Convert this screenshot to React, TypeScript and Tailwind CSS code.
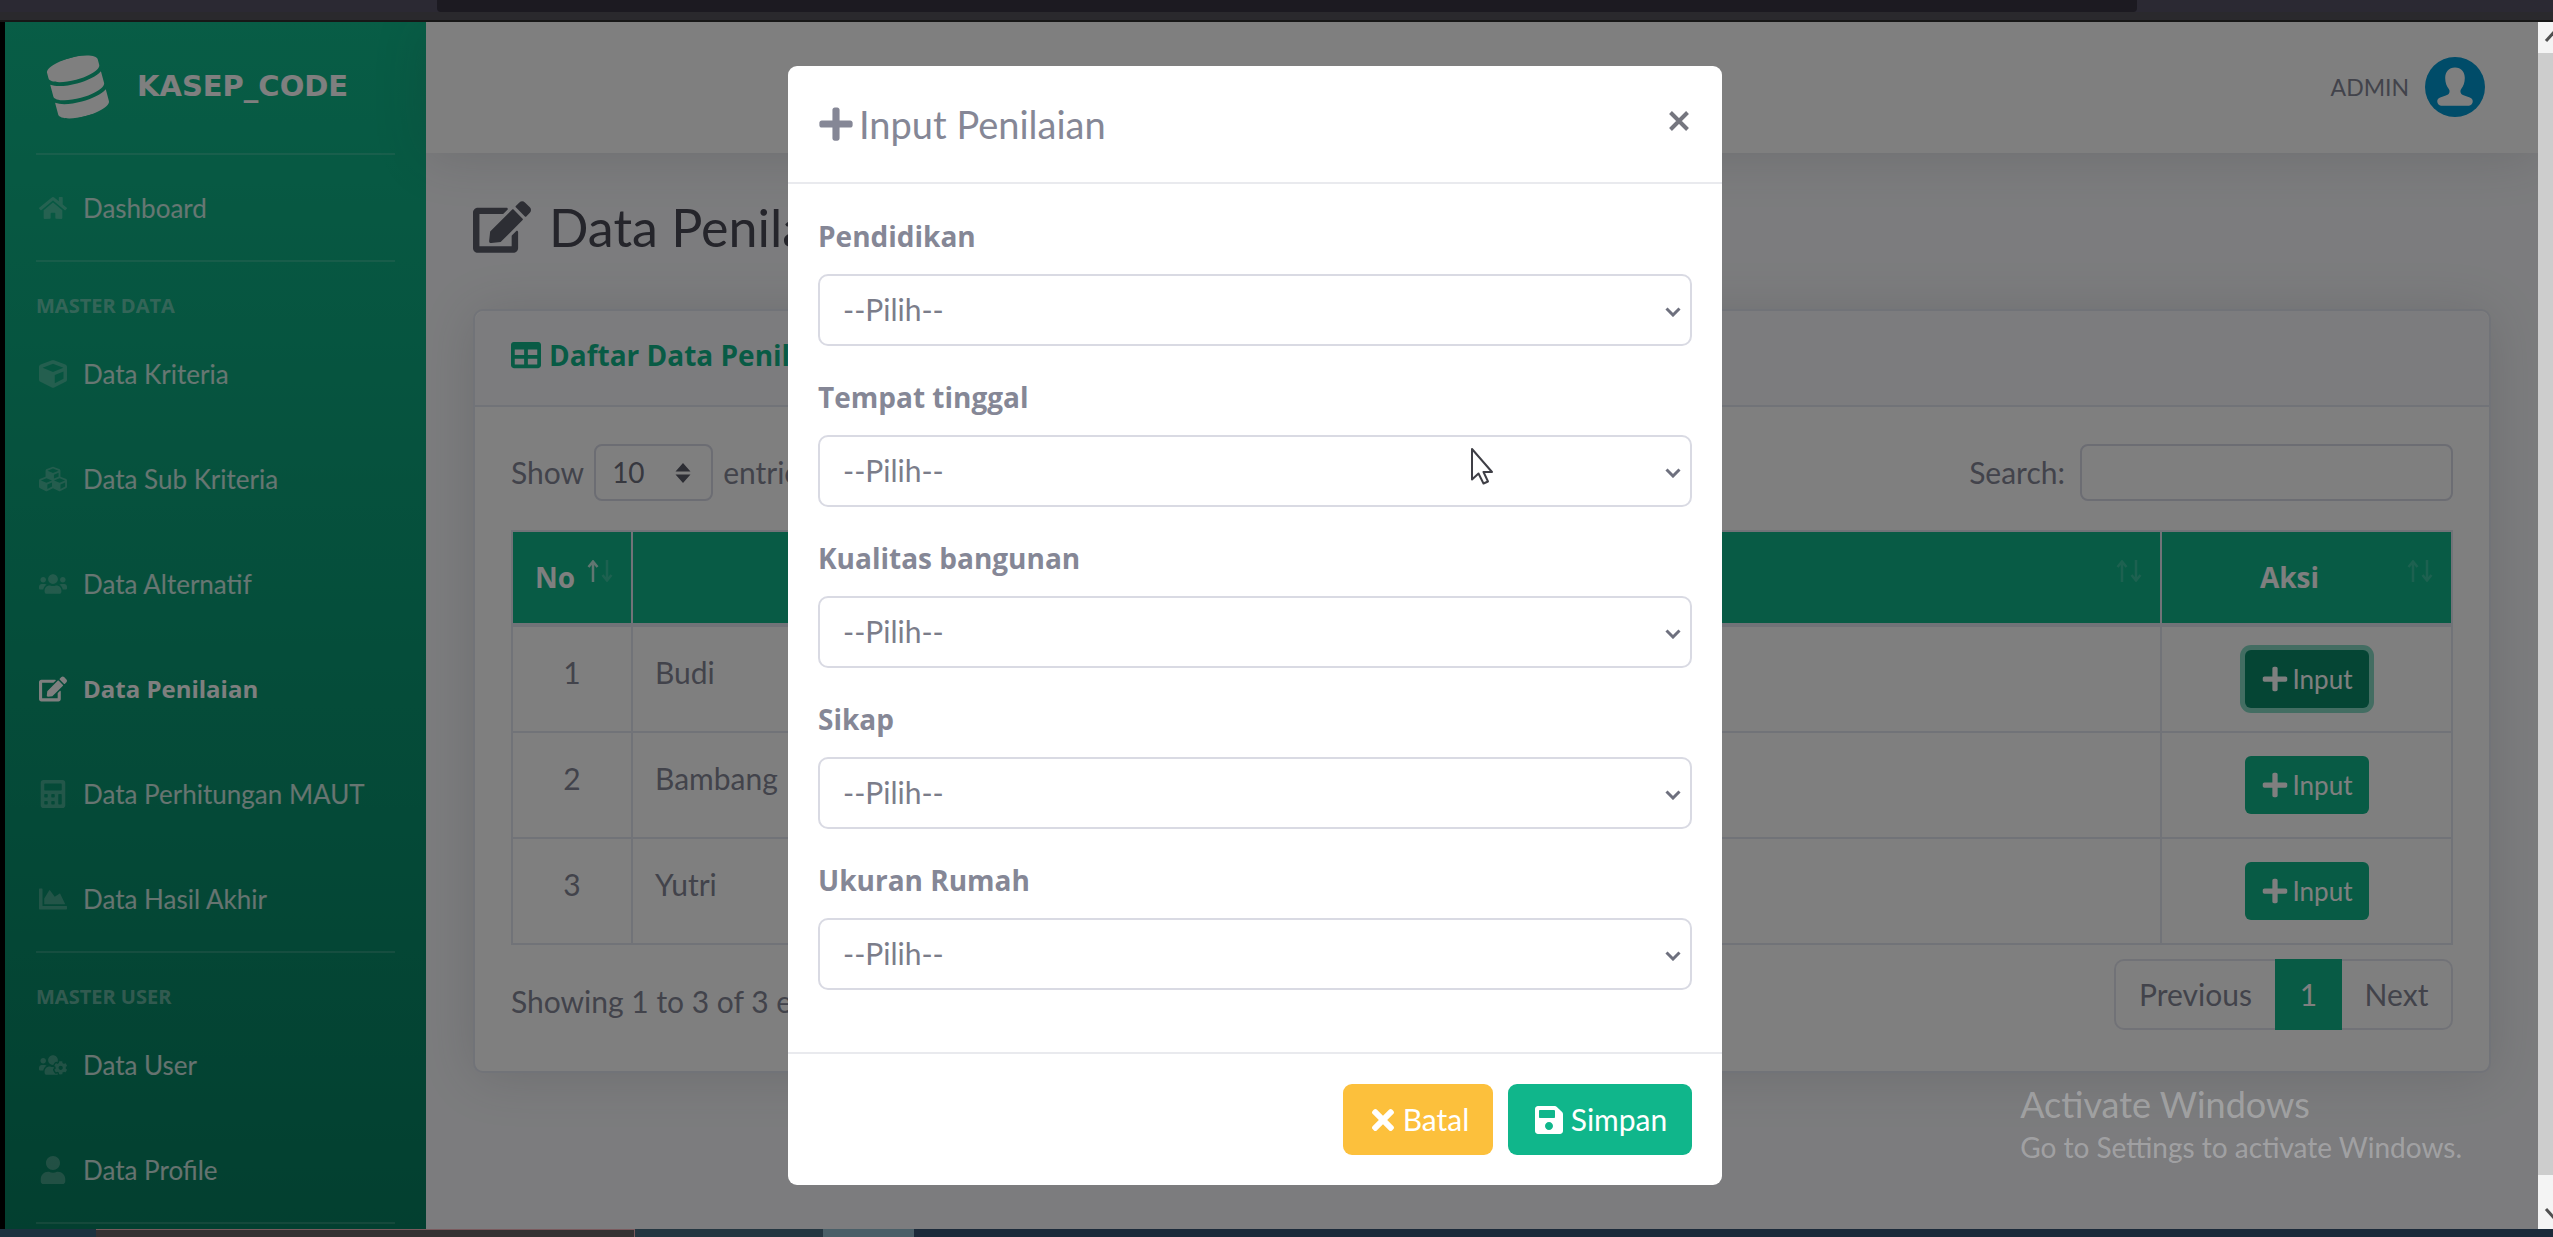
import React from "react";
import {
  FaCalculator,
  FaChartArea,
  FaCube,
  FaCubes,
  FaDatabase,
  FaEdit,
  FaHome,
  FaPlus,
  FaSave,
  FaTable,
  FaTimes,
  FaUser,
  FaUsers,
  FaUsersCog,
} from "react-icons/fa";
import type { IconType } from "react-icons";

const BOLD = "font-['Open_Sans','Noto_Sans',sans-serif] font-bold";

function NavLink({ icon: Icon, label, active }: { icon: IconType; label: string; active?: boolean }) {
  return (
    <li>
      <a href="#" className="flex h-[105px] items-center gap-[14px] px-[31px]">
        <span className="flex w-[33px] shrink-0 justify-center">
          <Icon className={active ? "h-[28px] w-auto shrink-0 text-white" : "h-[28px] w-auto shrink-0 text-white/25"} />
        </span>
        <span
          className={
            active
              ? `${BOLD} text-[24px] leading-[40px] text-white`
              : "text-[26px] leading-[40px] text-white/80"
          }
        >
          {label}
        </span>
      </a>
    </li>
  );
}

function Divider() {
  return <li aria-hidden="true" className="mx-[31px] h-[2px] bg-white/15" />;
}

function NavHeading({ children }: { children: React.ReactNode }) {
  return (
    <li className={`${BOLD} px-[31px] pt-[29px] text-[20px] leading-[30px] text-white/40 uppercase`}>{children}</li>
  );
}

function Sidebar() {
  return (
    <nav className="w-[421px] shrink-0 bg-linear-to-b from-[#10ba8c] to-[#067f60]">
      <a href="#" className="flex h-[131px] items-center gap-[29px] px-[43px] pb-[2px] text-white">
        <FaDatabase className="h-[60px] w-auto shrink-0 -rotate-[15deg]" />
        <span className="font-['DejaVu_Sans',sans-serif] text-[29px] leading-[45px] font-bold">KASEP_CODE</span>
      </a>
      <ul>
        <Divider />
        <NavLink icon={FaHome} label="Dashboard" />
        <Divider />
        <NavHeading>Master Data</NavHeading>
        <NavLink icon={FaCube} label="Data Kriteria" />
        <NavLink icon={FaCubes} label="Data Sub Kriteria" />
        <NavLink icon={FaUsers} label="Data Alternatif" />
        <NavLink icon={FaEdit} label="Data Penilaian" active />
        <NavLink icon={FaCalculator} label="Data Perhitungan MAUT" />
        <NavLink icon={FaChartArea} label="Data Hasil Akhir" />
        <Divider />
        <NavHeading>Master User</NavHeading>
        <NavLink icon={FaUsersCog} label="Data User" />
        <NavLink icon={FaUser} label="Data Profile" />
        <Divider />
      </ul>
    </nav>
  );
}

function Avatar() {
  return (
    <svg viewBox="0 0 60 60" className="size-[60px]" aria-hidden="true">
      <circle cx="30" cy="30" r="30" fill="#0098d2" />
      <path
        d="M30 10.500c-6.200 0-9.800 4.300-9.800 10.500 0 4.600 1.400 8.500 3.600 11 .9 1.200.9 2.500.5 3.800-.5 1.500-1.700 2.200-3.500 2.800l-5.600 2c-2.200.9-3.200 2.500-2.900 4.300.3 1.700 1.700 3.400 3.700 3.900h28c2-.5 3.400-2.200 3.700-3.900.3-1.800-.7-3.400-2.900-4.300l-5.600-2c-1.800-.6-3-1.300-3.500-2.800-.4-1.300-.4-2.600.5-3.800 2.200-2.500 3.600-6.400 3.600-11 0-6.200-3.600-10.500-9.800-10.500z"
        fill="#fff"
      />
    </svg>
  );
}

function SortIcon({ sorted }: { sorted?: boolean }) {
  return (
    <svg
      viewBox="0 0 26 22"
      className="absolute top-[28px] right-[18px] h-[22px] w-[26px]"
      fill="none"
      stroke="#fff"
      strokeWidth="2.500"
      aria-hidden="true"
    >
      <path d="M6 22V2M1.500 7 6 1.500 10.500 7" opacity={sorted ? 0.75 : 0.18} />
      <path d="M20 0v20M15.500 15l4.500 5.500 4.500-5.500" opacity="0.18" />
    </svg>
  );
}

const rows = ["Budi", "Bambang", "Yutri"];

function DataTable() {
  const th = "relative h-[94px] border-2 border-b-4 border-[#e3e6f0] px-[22px] text-[28px] leading-[45px]";
  const td = "border-2 border-[#e3e6f0] px-[22px] py-[23px] align-top";
  return (
    <table className="mt-[29px] w-full table-fixed border-collapse">
      <colgroup>
        <col className="w-[120px]" />
        <col />
        <col className="w-[291px]" />
      </colgroup>
      <thead className={`${BOLD} bg-[#10b68b] text-white`}>
        <tr>
          <th className={`${th} text-left`}>
            No
            <SortIcon sorted />
          </th>
          <th className={th}>
            Nama Alternatif
            <SortIcon />
          </th>
          <th className={`${th} pr-[56px]`}>
            Aksi
            <SortIcon />
          </th>
        </tr>
      </thead>
      <tbody>
        {rows.map((name, i) => (
          <tr key={name}>
            <td className={`${td} text-center`}>{i + 1}</td>
            <td className={td}>{name}</td>
            <td className={td}>
              <div className="flex justify-center">
                <button
                  type="button"
                  className={
                    i === 0
                      ? "flex h-[58px] w-[124px] items-center justify-center gap-[4px] rounded-md bg-[#0a8a69] text-[26px] text-white ring-[5px] ring-[#10b68b]/50"
                      : "flex h-[58px] w-[124px] items-center justify-center gap-[4px] rounded-md bg-[#10b68b] text-[26px] text-white"
                  }
                >
                  <FaPlus className="h-[28px] w-auto" />
                  Input
                </button>
              </div>
            </td>
          </tr>
        ))}
      </tbody>
    </table>
  );
}

function Content() {
  return (
    <div className="flex min-w-0 flex-1 flex-col bg-[#f8f9fc]">
      <header className="flex h-[131px] shrink-0 items-center justify-end gap-[16px] bg-white pr-[53px] pb-[2px] shadow-[0_4px_53px_rgba(58,59,69,0.15)]">
        <span className="text-[23px] leading-[36px] text-[#858796]">ADMIN</span>
        <Avatar />
      </header>
      <main className="px-[47px] pt-[43px]">
        <h1 className="mb-[51px] flex items-center gap-[18px] text-[52px] leading-[62px] text-[#4a4b57]">
          <FaEdit className="h-[58px] w-auto text-[#5a5c69]" />
          Data Penilaian
        </h1>
        <section className="rounded-[10px] border-2 border-[#e3e6f0] bg-white shadow-[0_4px_53px_rgba(58,59,69,0.15)]">
          <h2
            className={`${BOLD} flex h-[96px] items-center gap-[8px] rounded-t-[10px] border-b-2 border-[#e3e6f0] bg-[#f8f9fc] px-[36px] pb-[6px] text-[28px] text-[#10b68b]`}
          >
            <FaTable className="h-[30px] w-auto" />
            Daftar Data Penilaian
          </h2>
          <div className="px-[36px] pt-[37px] pb-[41px]">
            <div className="flex items-center justify-between">
              <label className="flex items-center gap-[10px]">
                Show
                <span className="relative">
                  <select className="h-[57px] w-[119px] appearance-none rounded-[8px] border-2 border-[#d8dae6] bg-white pl-[16px] text-[28px] text-[#6e707e]">
                    <option>10</option>
                  </select>
                  <svg viewBox="0 0 16 20" className="pointer-events-none absolute top-[19px] right-[22px] h-[20px] w-[16px]" fill="#5a5c69">
                    <path d="M8 0l7.500 8.500H.5zM8 20l7.500-8.500H.5z" />
                  </svg>
                </span>
                entries
              </label>
              <label className="flex items-center gap-[15px]">
                Search:
                <input type="search" className="h-[57px] w-[373px] rounded-[8px] border-2 border-[#d8dae6] bg-white px-4" />
              </label>
            </div>
            <DataTable />
            <div className="mt-[14px] flex items-center justify-between">
              <p className="pb-[1px] pt-[14px]">Showing 1 to 3 of 3 entries</p>
              <div className="flex h-[71px]">
                <button type="button" className="w-[161px] rounded-l-[10px] border-2 border-r-0 border-[#e3e5ee]">
                  Previous
                </button>
                <button type="button" className="w-[67px] bg-[#10b68b] text-white">
                  1
                </button>
                <button type="button" className="w-[111px] rounded-r-[10px] border-2 border-l-0 border-[#e3e5ee]">
                  Next
                </button>
              </div>
            </div>
          </div>
        </section>
      </main>
    </div>
  );
}

const criteria = ["Pendidikan", "Tempat tinggal", "Kualitas bangunan", "Sikap", "Ukuran Rumah"];

function InputModal() {
  return (
    <form className="relative mt-[44px] w-[934px] rounded-[9px] bg-white text-[#858796]">
      <header className="flex h-[118px] items-center justify-between border-b-2 border-[#e9eaee] px-[29px]">
        <h2 className="flex items-center gap-[4px] text-[38px] leading-[56px]">
          <FaPlus className="h-[38px] w-auto" />
          Input Penilaian
        </h2>
        <button type="button" aria-label="Close" className="px-[4px] pb-[6px]">
          <svg viewBox="0 0 20 20" className="size-[20px]" stroke="#75767f" strokeWidth="4" fill="none">
            <path d="M1.500 1.500l17 17M18.500 1.500l-17 17" />
          </svg>
        </button>
      </header>
      <div className="px-[30px] pt-[30px] pb-[33px]">
        {criteria.map((label) => (
          <div key={label} className="mb-[29px]">
            <label htmlFor={label} className={`${BOLD} block text-[28px] leading-[45px]`}>
              {label}
            </label>
            <div className="relative mt-[15px]">
              <select
                id={label}
                className="block h-[72px] w-full appearance-none rounded-[10px] border-2 border-[#d9dae3] bg-white pb-[2px] pl-[23px] text-[#7b7d8a]"
              >
                <option>--Pilih--</option>
              </select>
              <svg viewBox="0 0 16 10" className="pointer-events-none absolute top-[33px] right-[11px] h-[10px] w-[16px]" stroke="#6e707e" strokeWidth="3" fill="none">
                <path d="M1.500 1.500 8 8l6.500-6.500" />
              </svg>
            </div>
          </div>
        ))}
      </div>
      <footer className="flex justify-end gap-[15px] border-t-2 border-[#e9eaee] p-[30px] text-white">
        <button type="button" className="flex h-[71px] w-[150px] items-center justify-center gap-[4px] rounded-[9px] bg-[#fcc03c]">
          <FaTimes className="h-[32px] w-auto" />
          Batal
        </button>
        <button type="submit" className="flex h-[71px] w-[184px] items-center justify-center gap-[6px] rounded-[9px] bg-[#10b68b]">
          <FaSave className="h-[32px] w-auto" />
          Simpan
        </button>
      </footer>
      <svg viewBox="0 0 24 38" className="absolute top-[381px] left-[682px] h-[38px] w-[24px]" aria-hidden="true">
        <path d="M2 2v30.500l6.500-6 5 10 4.500-2-4.500-9.500H22z" fill="#fff" stroke="#3f3f46" strokeWidth="2" strokeLinejoin="round" />
      </svg>
    </form>
  );
}

function PageScrollbar() {
  return (
    <div className="flex w-[15px] shrink-0 flex-col overflow-hidden bg-[#f4f4f4]">
      <svg viewBox="0 0 15 31" className="h-[31px] w-[15px]" stroke="#505050" strokeWidth="3" fill="none">
        <path d="M8 19l9-10" />
      </svg>
      <div className="flex-1 bg-[#cdcdcd]" />
      <svg viewBox="0 0 15 54" className="h-[54px] w-[15px]" stroke="#505050" strokeWidth="3" fill="none">
        <path d="M8 34l9 10" />
      </svg>
    </div>
  );
}

export default function App() {
  return (
    <div className="flex h-screen flex-col overflow-hidden bg-black font-['Lato','Noto_Sans',sans-serif] text-[30px] leading-[45px] text-[#858796]">
      <div className="flex h-[22px] shrink-0 flex-col border-b-2 border-[#171717] bg-[#2b2933]">
        <div className="mr-[416px] ml-[437px] h-[12px] rounded-b-sm bg-[#1c1a21]" />
        <div className="flex-1 bg-[#2a292d]" />
      </div>
      <div className="flex min-h-0 flex-1 pl-[5px]">
        <div className="relative flex min-w-0 flex-1 overflow-hidden">
          <Sidebar />
          <Content />
          <div className="absolute inset-0 flex items-start justify-center bg-black/50 pr-[33px]">
            <InputModal />
          </div>
          <div className="absolute right-[76px] bottom-[62px] text-white/30">
            <p className="text-[36px] leading-[46px]">Activate Windows</p>
            <p className="text-[28px] leading-[40px]">Go to Settings to activate Windows.</p>
          </div>
        </div>
        <PageScrollbar />
      </div>
      <div className="flex h-[8px] shrink-0 bg-[#1b2a3a]">
        <div className="w-[96px] bg-[#1d3340]" />
        <div className="w-[539px] border-t border-r border-[#7a5a5e] bg-[#353233]" />
        <div className="w-[188px] bg-[#243641]" />
        <div className="w-[91px] bg-[#4a5f68]" />
      </div>
    </div>
  );
}
